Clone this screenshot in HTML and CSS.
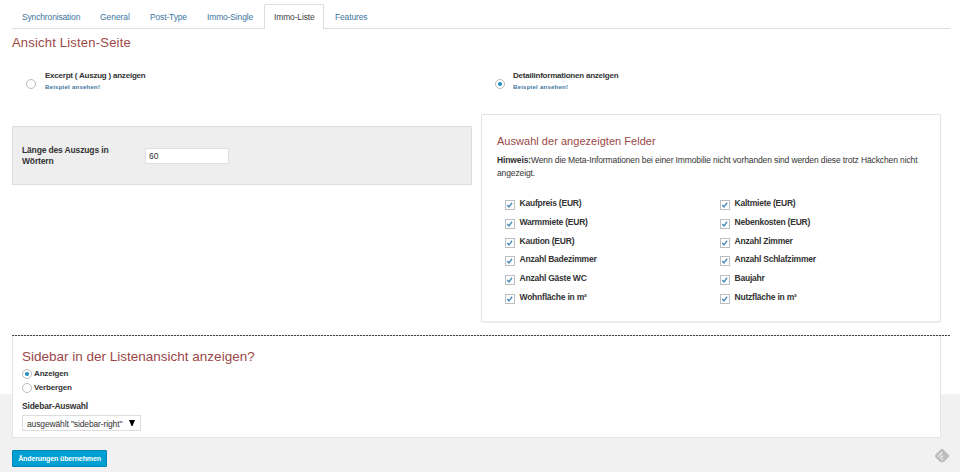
FILE: index.html
```html
<!DOCTYPE html>
<html lang="de">
<head>
<meta charset="utf-8">
<title>Immo-Liste</title>
<link rel="stylesheet" href="styles.css">
</head>
<body>
<svg class="defs" width="0" height="0"><symbol id="check" viewBox="0 0 10 10"><path d="M1.500 5 3.700 7.300 7.600 2.200" fill="none" stroke="#4a8db8" stroke-width="1.700"/></symbol></svg>
<nav class="tabs">
  <a class="tab t-sync">Synchronisation</a>
  <a class="tab t-general">General</a>
  <a class="tab t-post">Post-Type</a>
  <a class="tab t-single">Immo-Single</a>
  <a class="tab t-list active">Immo-Liste</a>
  <a class="tab t-features">Features</a>
</nav>
<main>
  <h1>Ansicht Listen-Seite</h1>
  <div class="columns">
    <section class="left">
      <div class="choice"><span class="radio"></span><div><b>Excerpt ( Auszug ) anzeigen</b><a>Beispiel ansehen!</a></div></div>
      <div class="excerpt">
        <label for="words">Länge des Auszugs in Wörtern</label>
        <input id="words" value="60">
      </div>
    </section>
    <section class="right">
      <div class="choice"><span class="radio on"></span><div><b>Detailinformationen anzeigen</b><a>Beispiel ansehen!</a></div></div>
      <div class="fields">
        <h2>Auswahl der angezeigten Felder</h2>
        <p><b>Hinweis:</b>Wenn die Meta-Informationen bei einer Immobilie nicht vorhanden sind werden diese trotz Häckchen nicht<br>angezeigt.</p>
        <div class="checks">
          <div class="check"><svg><use href="#check"/></svg><span>Kaufpreis (EUR)</span></div>
          <div class="check"><svg><use href="#check"/></svg><span>Kaltmiete (EUR)</span></div>
          <div class="check"><svg><use href="#check"/></svg><span>Warmmiete (EUR)</span></div>
          <div class="check"><svg><use href="#check"/></svg><span>Nebenkosten (EUR)</span></div>
          <div class="check"><svg><use href="#check"/></svg><span>Kaution (EUR)</span></div>
          <div class="check"><svg><use href="#check"/></svg><span>Anzahl Zimmer</span></div>
          <div class="check"><svg><use href="#check"/></svg><span>Anzahl Badezimmer</span></div>
          <div class="check"><svg><use href="#check"/></svg><span>Anzahl Schlafzimmer</span></div>
          <div class="check"><svg><use href="#check"/></svg><span>Anzahl Gäste WC</span></div>
          <div class="check"><svg><use href="#check"/></svg><span>Baujahr</span></div>
          <div class="check"><svg><use href="#check"/></svg><span>Wohnfläche in m²</span></div>
          <div class="check"><svg><use href="#check"/></svg><span>Nutzfläche in m²</span></div>
        </div>
      </div>
    </section>
  </div>
  <div class="divider"></div>
  <section class="sidebar">
    <h3>Sidebar in der Listenansicht anzeigen?</h3>
    <div class="option"><span class="radio on"></span>Anzeigen</div>
    <div class="option"><span class="radio"></span>Verbergen</div>
    <div class="caption">Sidebar-Auswahl</div>
    <div class="select"><span>ausgewählt "sidebar-right"</span><svg width="6" height="6" viewBox="0 0 6 6"><path d="M0 0H6L3.500 6H2.500Z"/></svg></div>
  </section>
  <footer>
    <button>Änderungen übernehmen</button>
    <svg class="badge" width="16" height="16" viewBox="0 0 16 16"><path d="M6.600 1.500Q8 .2 9.400 1.500L14.500 6.600Q15.600 8 14.500 9.300L10.500 13.500Q9.800 14.200 8.800 14.200H7.200Q6.200 14.200 5.500 13.500L1.500 9.300Q.4 8 1.500 6.600Z" fill="#bdbdbd"/><path d="M4 8.600 8.300 4.300M6.200 10.300 9 7.500M7.700 12 9 10.700" stroke="#f1f1f1" stroke-width="1.300" fill="none"/></svg>
  </footer>
</main>
</body>
</html>
```
FILE: styles.css
```css
* { box-sizing: border-box; }
body {
  margin: 0;
  height: 472px;
  padding: 4px 10px 0 12px;
  overflow: hidden;
  background: linear-gradient(#fff 394px, #f1f1f1 394px);
  font-family: "Liberation Sans", Arial, sans-serif;
  font-size: 8.5px;
  color: #333;
}
.defs { display: block; height: 0; }
h1, h2, h3, p { margin: 0; font-weight: normal; }
.tabs { display: flex; height: 25px; border-bottom: 1px solid #ddd; }
.tab {
  height: 25px;
  padding-left: 10px;
  font-size: 8.5px;
  letter-spacing: -0.15px;
  line-height: 26px;
  color: #3c75a0;
  white-space: nowrap;
}
.t-sync { width: 78px; }
.t-general { width: 50px; letter-spacing: -0.05px; }
.t-post { width: 57px; }
.t-single { width: 67px; }
.t-list { width: 60px; }
.t-features { width: 60px; padding-left: 11px; }
.tab.active {
  padding-left: 9px;
  line-height: 24px;
  border: 1px solid #ddd;
  border-bottom: 0;
  border-radius: 2px 2px 0 0;
  background: #fff;
  color: #444;
}
h1, h2, h3 { color: #9b4747; white-space: nowrap; }
h1 { height: 41px; padding-top: 6px; font-size: 13px; letter-spacing: 0.2px; line-height: 16px; }
.columns { display: flex; gap: 9px; height: 265px; }
.left { width: 460px; }
.right { width: 460px; }
.choice { display: flex; height: 44px; padding-left: 14px; }
.left .choice { height: 56px; }
.choice .radio { margin: 9px 8px 0 0; }
.left .choice .radio { margin-right: 9px; }
.choice b, .choice a { display: block; white-space: nowrap; }
.choice b { height: 11px; font-size: 8px; letter-spacing: -0.22px; line-height: 11px; }
.choice a { height: 12px; font-size: 6px; font-weight: bold; letter-spacing: 0.25px; line-height: 12px; color: #3c75a0; }
.radio {
  display: grid;
  place-items: center;
  flex: none;
  width: 10px;
  height: 10px;
  border: 1px solid #bbb;
  border-radius: 50%;
  background: #fff;
}
.radio.on::after { content: ""; width: 4px; height: 4px; border-radius: 50%; background: #1e8cbe; }
.excerpt {
  display: flex;
  height: 59px;
  padding: 18px 9px 0;
  border: 1px solid #ddd;
  background: #eee;
}
.excerpt label { width: 123px; padding-right: 25px; font-weight: bold; letter-spacing: -0.15px; line-height: 11px; }
.excerpt input {
  width: 84px;
  height: 16px;
  margin-top: 3px;
  padding: 0 3px;
  border: 1px solid #ddd;
  background: #fff;
  color: #333;
  font: 8.5px "Liberation Sans", Arial, sans-serif;
}
.fields {
  height: 209px;
  padding: 20px 15px 0;
  border: 1px solid #e3e3e3;
  border-bottom: 2px solid #ececec;
  border-radius: 2px;
  background: #fff;
}
h2 { height: 19px; font-size: 11px; letter-spacing: 0.03px; line-height: 13px; }
.fields p { height: 43px; letter-spacing: -0.12px; line-height: 12.5px; white-space: nowrap; }
.checks { display: grid; grid-template-columns: 215px 190px; grid-auto-rows: 18.8px; padding-left: 8px; }
.check { display: flex; gap: 4.5px; font-weight: bold; letter-spacing: -0.22px; line-height: 12px; white-space: nowrap; }
.check svg { width: 10px; height: 10px; margin-top: 3px; border: 1px solid #b9bfc3; background: #fff; }
.divider { width: 938px; height: 1px; background: repeating-linear-gradient(90deg, #444 0 2px, #ddd 2px 3px); }
.sidebar {
  width: 929px;
  height: 102px;
  padding: 13px 9px 0;
  border: solid #e5e5e5;
  border-width: 0 1px 1px;
  background: #fff;
}
h3 { height: 20px; font-size: 13.5px; line-height: 16px; }
.option { display: flex; gap: 2px; height: 14px; font-size: 8px; font-weight: bold; letter-spacing: -0.15px; line-height: 10px; }
.caption { padding-top: 4px; height: 18px; font-weight: bold; letter-spacing: -0.2px; line-height: 11px; }
.select {
  display: flex;
  justify-content: space-between;
  width: 119px;
  height: 16px;
  padding: 4px 5px 0 4px;
  border: 1px solid #ddd;
  font-size: 8.5px;
  letter-spacing: -0.13px;
  line-height: 9px;
  white-space: nowrap;
}
footer { display: flex; justify-content: space-between; padding-top: 10px; }
footer button {
  width: 95px;
  height: 17px;
  margin-top: 2px;
  padding: 0;
  border: 1px solid #0083b8;
  border-radius: 1px;
  background: #00a0d2;
  color: #fff;
  font: bold 7px "Liberation Sans", Arial, sans-serif;
  letter-spacing: -0.12px;
  white-space: nowrap;
}
```
